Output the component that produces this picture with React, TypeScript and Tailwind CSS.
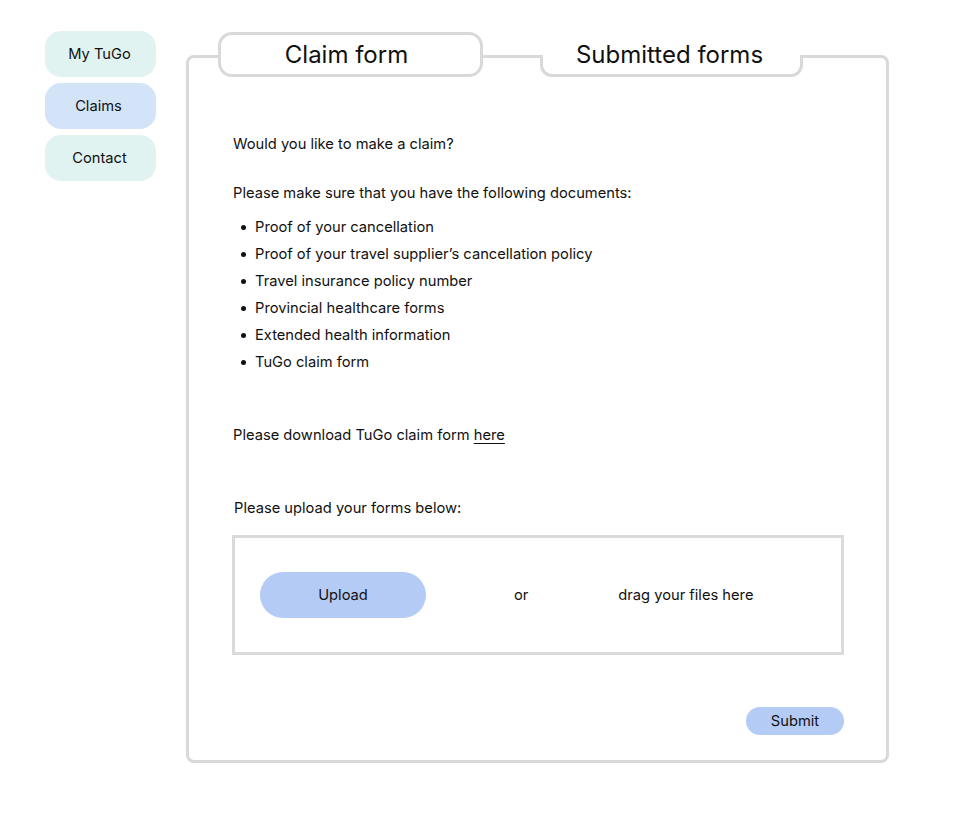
export default function App() {
  const docs = [
    "Proof of your cancellation",
    "Proof of your travel supplier\u2019s cancellation policy",
    "Travel insurance policy number",
    "Provincial healthcare forms",
    "Extended health information",
    "TuGo claim form",
  ];

  return (
    <div
      className="flex min-h-[838px] items-start bg-white pl-[45px] pt-[31px] text-[14.7px] text-[#111]"
      style={{ fontFamily: "Inter, 'Noto Sans', sans-serif" }}
    >
      {/* Sidebar */}
      <nav className="flex w-[111px] flex-col gap-[6px]">
        <button className="h-[46px] rounded-[16px] bg-[#e1f3f1] pr-[2px] text-center">My TuGo</button>
        <button className="h-[46px] rounded-[16px] bg-[#d4e4f8] pr-[4px] text-center">Claims</button>
        <button className="h-[46px] rounded-[16px] bg-[#e1f3f1] pr-[2px] text-center">Contact</button>
      </nav>

      {/* Panel */}
      <div className="relative ml-[30px] mt-[24px] h-[708px] w-[703px] rounded-[8px] border-[3px] border-[#d9d9d9] bg-white">
        {/* Tabs */}
        <div className="absolute -top-[26px] left-[29px] flex h-[45px] w-[265px] items-center justify-center rounded-[14px] border-[3px] border-[#d9d9d9] bg-white pr-[8px] pt-[1px] text-[24px]">
          Claim form
        </div>
        <div className="absolute -top-[3px] left-[351px] h-[22px] w-[263px] rounded-b-[12px] border-x-[3px] border-b-[3px] border-[#d9d9d9] bg-white">
          <span className="-mt-[15px] block pr-[4px] text-center text-[24px] leading-[30px]">Submitted forms</span>
        </div>

        <div className="flex flex-col pl-[44px] pr-[42px] pt-[76px]">
          <p className="leading-[20px]">Would you like to make a claim?</p>
          <p className="mt-[29px] leading-[20px]">Please make sure that you have the following documents:</p>
          <ul className="mt-[11px] flex flex-col">
            {docs.map((d) => (
              <li key={d} className="flex items-center leading-[27px]">
                <span className="ml-[8px] mr-[9px] h-[5px] w-[5px] rounded-full bg-[#111]" />
                {d}
              </li>
            ))}
          </ul>
          <p className="mt-[49px] leading-[20px]">
            Please download TuGo claim form <span className="underline underline-offset-[3px]">here</span>
          </p>
          <p className="ml-[1px] mt-[53px] leading-[20px]">Please upload your forms below:</p>

          <div className="-ml-[1px] mt-[17px] flex h-[120px] w-[612px] items-center border-[3px] border-[#dadada] pl-[25px]">
            <button className="h-[46px] w-[166px] rounded-full bg-[#b4cbf6]">Upload</button>
            <span className="ml-[88px]">or</span>
            <span className="ml-[90px]">drag your files here</span>
          </div>

          <div className="mt-[52px] flex justify-end">
            <button className="h-[28px] w-[98px] rounded-full bg-[#b4cbf6]">Submit</button>
          </div>
        </div>
      </div>
    </div>
  );
}
